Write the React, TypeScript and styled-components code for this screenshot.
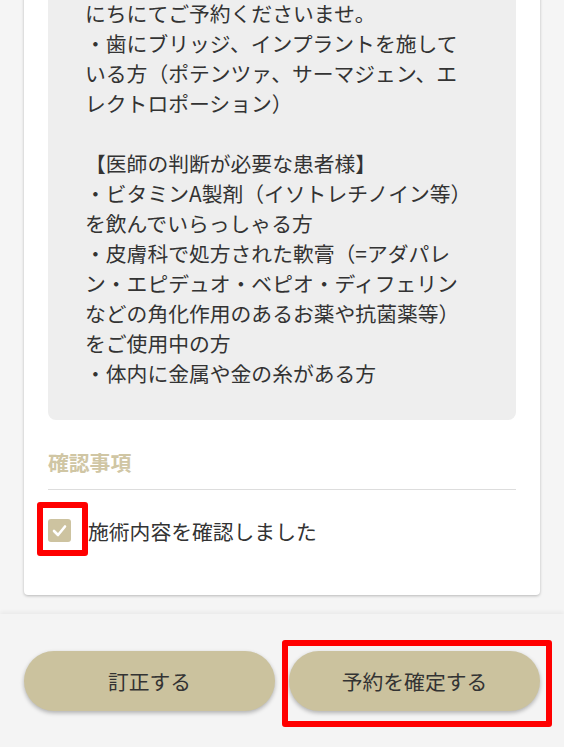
import styled, { createGlobalStyle } from "styled-components";

const GlobalStyle = createGlobalStyle`
  html, body {
    margin: 0;
    padding: 0;
    background: #f5f5f5;
    font-family: "Noto Sans CJK JP", "Noto Sans", sans-serif;
    color: #333;
  }
  #root {
    height: 100vh;
  }
`;

const Screen = styled.div`
  height: 100vh;
  display: flex;
  flex-direction: column;
`;

const Main = styled.main`
  flex: 1;
  min-height: 0;
  overflow: hidden;
  display: flex;
  flex-direction: column;
  justify-content: flex-end;
  padding: 0 24px 19px;
`;

const Card = styled.section`
  flex-shrink: 0;
  background: #fff;
  border-radius: 4px;
  box-shadow: 0 1px 3px rgba(0, 0, 0, 0.25);
  padding: 24px 24px 49px;
`;

const NoticeBox = styled.div`
  background: #eeeeee;
  border-radius: 8px;
  padding: 32px 51px 32px 37px;
  font-size: 20.8px;
  line-height: 30px;
  white-space: pre-line;
  color: #333;
`;

const SectionTitle = styled.h3`
  margin: 27px 0 0;
  padding-bottom: 12px;
  border-bottom: 1px solid #dddddd;
  font-size: 20.8px;
  line-height: 30px;
  font-weight: 700;
  color: #d0c6a4;
`;

const CheckRow = styled.label`
  margin-top: 26px;
  display: flex;
  align-items: center;
  gap: 17px;
  font-size: 20.8px;
  line-height: 30px;
  color: #333;
`;

const CheckWrap = styled.span`
  position: relative;
  display: flex;
  width: 23px;
  height: 23px;
  margin-top: -2px;
`;

const Highlight = styled.span<{
  $top: number;
  $left: number;
  $right: number;
  $bottom: number;
}>`
  position: absolute;
  top: ${({ $top }) => $top}px;
  left: ${({ $left }) => $left}px;
  right: ${({ $right }) => $right}px;
  bottom: ${({ $bottom }) => $bottom}px;
  border: 6px solid #ff0000;
  border-radius: 3px;
  pointer-events: none;
`;

const Footer = styled.footer`
  flex-shrink: 0;
  background: #f4f4f4;
  box-shadow: 0 -2px 4px rgba(0, 0, 0, 0.05);
  padding: 37px 24px 36px;
  display: grid;
  grid-template-columns: 1fr 1fr;
  gap: 14px;
`;

const ButtonWrap = styled.div`
  position: relative;
  display: flex;
`;

const PillButton = styled.button`
  flex: 1;
  height: 60px;
  border: none;
  border-radius: 30px;
  background: #cbc29e;
  box-shadow: 0 2px 4px rgba(0, 0, 0, 0.28);
  font-family: "Noto Sans CJK JP", "Noto Sans", sans-serif;
  font-size: 20.8px;
  color: #333;
  cursor: pointer;
`;

const noticeText = `にちにてご予約くださいませ。
・歯にブリッジ、インプラントを施している方（ポテンツァ、サーマジェン、エレクトロポーション）

【医師の判断が必要な患者様】
・ビタミンA製剤（イソトレチノイン等）を飲んでいらっしゃる方
・皮膚科で処方された軟膏（=アダパレン・エピデュオ・ベピオ・ディフェリンなどの角化作用のあるお薬や抗菌薬等）をご使用中の方
・体内に金属や金の糸がある方`;

function CheckIcon() {
  return (
    <svg width="23" height="23" viewBox="0 0 23 23">
      <rect width="23" height="23" rx="3" fill="#cdc3a0" />
      <polyline
        points="6,12 10,16 17,7.5"
        fill="none"
        stroke="#fff"
        strokeWidth="2.6"
        strokeLinecap="round"
        strokeLinejoin="round"
      />
    </svg>
  );
}

export default function App() {
  return (
    <>
      <GlobalStyle />
      <Screen>
        <Main>
          <Card>
            <NoticeBox>{noticeText}</NoticeBox>
            <SectionTitle>確認事項</SectionTitle>
            <CheckRow>
              <CheckWrap>
                <CheckIcon />
                <Highlight $top={-17} $left={-11} $right={-17} $bottom={-14} />
              </CheckWrap>
              施術内容を確認しました
            </CheckRow>
          </Card>
        </Main>
        <Footer>
          <ButtonWrap>
            <PillButton>訂正する</PillButton>
          </ButtonWrap>
          <ButtonWrap>
            <PillButton>予約を確定する</PillButton>
            <Highlight $top={-11} $left={-7} $right={-12} $bottom={-16} />
          </ButtonWrap>
        </Footer>
      </Screen>
    </>
  );
}
